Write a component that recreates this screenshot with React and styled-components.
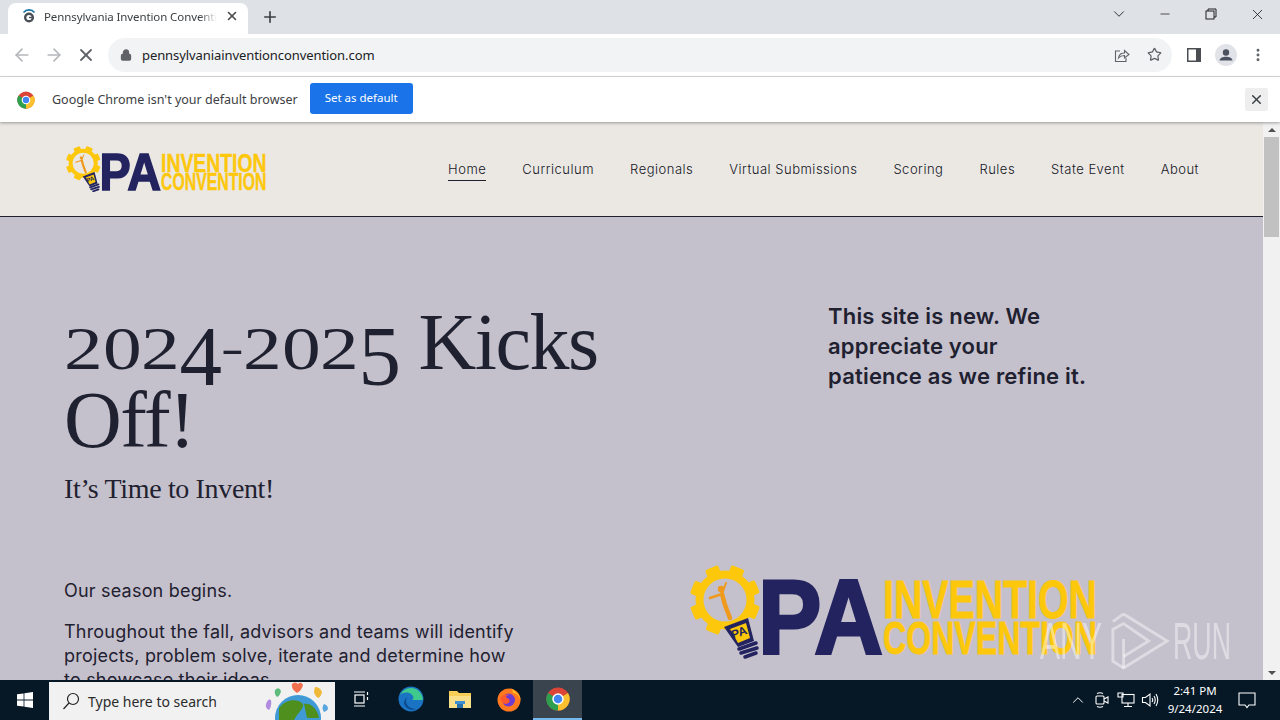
import React from 'react';
import styled, { createGlobalStyle } from 'styled-components';
import { ArrowLeft, ArrowRight, X, Lock, Star, Plus, ChevronDown, ChevronUp, Minus, MoreVertical } from 'lucide-react';

const GlobalStyle = createGlobalStyle`
  html, body { margin: 0; padding: 0; height: 100%; overflow: hidden; }
  * { box-sizing: border-box; }
  body { font-family: "Noto Sans", "Liberation Sans", sans-serif; }
`;

const Screen = styled.div`
  width: 1280px;
  height: 720px;
  display: flex;
  flex-direction: column;
  position: relative;
  overflow: hidden;
`;

const TabStrip = styled.div`
  height: 34px;
  flex: none;
  background: #dee1e6;
  display: flex;
  align-items: flex-end;
  padding-left: 8px;
`;

const Tab = styled.div`
  width: 240px;
  height: 31px;
  background: #fff;
  border-radius: 8px 8px 0 0;
  display: flex;
  align-items: center;
  padding: 0 9px 5px 14px;
  gap: 8px;
`;

const TabTitle = styled.span`
  flex: 1;
  font-size: 11.5px;
  letter-spacing: -.1px;
  color: #3c4043;
  white-space: nowrap;
  overflow: hidden;
  -webkit-mask-image: linear-gradient(to right, #000 90%, transparent);
  mask-image: linear-gradient(to right, #000 90%, transparent);
`;

const NewTab = styled.div`
  width: 28px;
  height: 28px;
  margin: 0 0 3px 8px;
  display: flex;
  align-items: center;
  justify-content: center;
  color: #3c4043;
`;

const WindowControls = styled.div`
  margin-left: auto;
  align-self: flex-start;
  display: flex;
  align-items: center;
  height: 28px;
  color: #202124;
`;

const WindowButton = styled.div`
  width: 46px;
  height: 28px;
  display: flex;
  align-items: center;
  justify-content: center;
`;

const Toolbar = styled.div`
  height: 43px;
  flex: none;
  background: #fff;
  border-bottom: 1px solid #dadce0;
  display: flex;
  align-items: center;
  padding: 0 4px 1px 6px;
`;

const NavButton = styled.div`
  width: 32px;
  height: 32px;
  display: flex;
  align-items: center;
  justify-content: center;
  color: ${p => p.$dim ? '#b4b7bb' : '#5f6368'};
`;

const Omnibox = styled.div`
  width: 1064px;
  height: 34px;
  margin: 0 6px;
  border-radius: 17px;
  background: #f1f3f4;
  display: flex;
  align-items: center;
  padding: 0 2px 0 12px;
  color: #5f6368;
`;

const Url = styled.span`
  font-size: 13px;
  letter-spacing: -.08px;
  color: #202124;
  margin-left: 10px;
  flex: 1;
`;

const InfoBar = styled.div`
  height: 45px;
  flex: none;
  background: #fff;
  display: flex;
  align-items: center;
  padding: 0 12px 0 17px;
  box-shadow: 0 1px 3px rgba(0, 0, 0, .35);
  position: relative;
  z-index: 2;
`;

const InfoText = styled.span`
  font-size: 12.5px;
  color: #3c4043;
  margin-left: 17px;
`;

const DefaultButton = styled.div`
  width: 103px;
  height: 31px;
  margin: 0 0 2px 12px;
  background: #1a73e8;
  border-radius: 3px;
  color: #fff;
  font-size: 11.5px;
  display: flex;
  align-items: center;
  justify-content: center;
  padding-bottom: 3px;
`;

const InfoClose = styled.div`
  margin-left: auto;
  width: 23px;
  height: 23px;
  background: #eeeeee;
  border-radius: 2px;
  display: flex;
  align-items: center;
  justify-content: center;
  color: #3c4043;
`;

const Viewport = styled.div`
  flex: 1;
  min-height: 0;
  display: flex;
`;

const Site = styled.div`
  flex: 1;
  min-width: 0;
  display: flex;
  flex-direction: column;
  overflow: hidden;
  background: #c4c0cc;
`;

const SiteHeader = styled.header`
  height: 95px;
  flex: none;
  background: #ebe8e4;
  border-bottom: 1px solid #1f2130;
  display: flex;
  align-items: center;
  justify-content: space-between;
  padding: 0 64px 0 65px;
`;

const Nav = styled.nav`
  display: flex;
  gap: 36px;
  margin-top: 4px;
`;

const NavLink = styled.a`
  font-family: "Inter", "Liberation Sans", sans-serif;
  font-size: 13px;
  font-weight: 300;
  letter-spacing: .5px;
  color: #14161f;
  padding-bottom: 3px;
  border-bottom: 1px solid ${p => p.$active ? '#1f2130' : 'transparent'};
`;

const Hero = styled.main`
  display: grid;
  grid-template-columns: 624px 1fr;
  padding: 86px 64px 0;
  color: #1f2130;
`;

const Heading = styled.h1`
  margin: 0;
  font-family: "Liberation Serif", serif;
  font-weight: 400;
  font-size: 80px;
  line-height: 78px;
  letter-spacing: -1.5px;
  width: 560px;
`;

const Low = styled.span`
  display: inline-block;
  font-size: 61px;
  line-height: 0;
  width: 38.5px;
  letter-spacing: 0;
  transform: scaleX(1.27);
  transform-origin: left center;
`;

const Drop = styled.span`
  font-size: 85px;
  line-height: 0;
  letter-spacing: -1px;
  position: relative;
  top: 16px;
`;

const Dash = styled.span`
  display: inline-block;
  line-height: 0;
  width: 22px;
  transform: scale(.85, .55) translateY(11px);
  transform-origin: left center;
`;

const Sub = styled.p`
  margin: 12px 0 0;
  font-family: "Liberation Serif", serif;
  font-size: 28px;
  line-height: 36px;
  letter-spacing: -.35px;
`;

const Note = styled.p`
  margin: -2px 0 0 140px;
  font-family: "Inter", "Liberation Sans", sans-serif;
  font-weight: 600;
  font-size: 22px;
  line-height: 30px;
  letter-spacing: .2px;
`;

const Copy = styled.div`
  margin-top: 72px;
  width: 455px;
  font-family: "Inter", "Liberation Sans", sans-serif;
  font-size: 18px;
  line-height: 24px;
  letter-spacing: .2px;
`;

const Para = styled.p`
  margin: 0 0 17px;
`;

const LogoSlot = styled.div`
  margin-top: 58px;
`;

const LogoSvg = styled.svg`
  display: block;
`;

const Scrollbar = styled.div`
  width: 17px;
  flex: none;
  background: #f1f1f1;
  display: flex;
  flex-direction: column;
  align-items: center;
  padding: 0 1px;
`;

const ScrollArrow = styled.div`
  height: 15px;
  flex: none;
  width: 100%;
  display: flex;
  align-items: center;
  justify-content: center;

  &::before {
    content: '';
    border-left: 4px solid transparent;
    border-right: 4px solid transparent;
    ${p => p.$up ? 'border-bottom: 4px solid #505050;' : 'border-top: 4px solid #505050;'}
  }
`;

const ScrollThumb = styled.div`
  width: 100%;
  height: 100px;
  background: #c1c1c1;
`;

const Spacer = styled.div`
  flex: 1;
`;

const Taskbar = styled.div`
  height: 40px;
  flex: none;
  background: #061826;
  display: flex;
  align-items: stretch;
`;

const StartButton = styled.div`
  width: 49px;
  display: flex;
  align-items: center;
  justify-content: center;
`;

const SearchBox = styled.div`
  width: 286px;
  margin-top: 2px;
  background: #f1f1f1;
  display: flex;
  align-items: center;
  padding: 0 1px 0 12px;
  color: #1a1a1a;
  overflow: hidden;
`;

const SearchText = styled.span`
  font-size: 14px;
  margin-left: 7px;
  color: #2b2b2b;
  flex: 1;
`;

const TaskIcon = styled.div`
  width: ${p => p.$w || 49}px;
  display: flex;
  align-items: center;
  justify-content: center;
  background: ${p => p.$active ? '#39444f' : 'transparent'};
  border-bottom: 2px solid ${p => p.$active ? '#76b9ed' : 'transparent'};
`;

const Tray = styled.div`
  margin-left: auto;
  display: flex;
  align-items: center;
  color: #fff;
  padding-right: 14px;
`;

const TrayIcon = styled.div`
  width: 24px;
  display: flex;
  align-items: center;
  justify-content: center;
`;

const Clock = styled.div`
  width: 66px;
  font-size: 11.5px;
  line-height: 18px;
  text-align: center;
  color: #fff;
`;

const NotifyButton = styled.div`
  width: 38px;
  display: flex;
  justify-content: center;
`;

const Watermark = styled.div`
  position: absolute;
  left: 1040px;
  top: 609px;
  display: flex;
  align-items: center;
  font-family: "Liberation Sans", sans-serif;
  color: rgba(255, 255, 255, .45);
  pointer-events: none;
`;

const MarkWord = styled.span`
  font-size: 52px;
  line-height: 64px;
  display: inline-block;
  width: ${p => p.$w}px;
  transform: scaleX(${p => p.$scale});
  transform-origin: left center;
  white-space: nowrap;
`;

const MarkIcon = styled.svg`
  margin: 0 3px 0 8px;
  flex: none;
`;

const ChromeLogo = ({ size = 18 }) => (
  <svg width={size} height={size} viewBox="0 0 48 48">
    <circle cx="24" cy="24" r="23" fill="#db4437" />
    <path d="M24 24 L44 12 A23 23 0 0 1 24 47 Z" fill="#fbc02d" />
    <path d="M24 24 L24 47 A23 23 0 0 1 4 12 Z" fill="#2e9e4f" />
    <circle cx="24" cy="24" r="11.5" fill="#fff" />
    <circle cx="24" cy="24" r="8.5" fill="#4285f4" />
  </svg>
);

const Favicon = () => (
  <svg width="14" height="16" viewBox="0 0 14 16" fill="none">
    <path d="M1.5 4.5 A7 7 0 0 1 12.5 4.5" stroke="#1a73a8" strokeWidth="1.6" />
    <circle cx="7" cy="9.5" r="5" fill="#4a4f55" />
    <circle cx="7" cy="9.5" r="2.6" fill="#fff" />
    <rect x="7" y="8.8" width="5" height="1.4" fill="#4a4f55" />
  </svg>
);

const Logo = ({ width }) => (
  <LogoSvg width={width} height={width * 95 / 410} viewBox="0 0 410 95">
    <g fill="#fdc70c">
      {[0, 45, 90, 135, 180, 225, 270, 315].map(a => (
        <rect key={a} x="30" y="0" width="14" height="12" rx="2" transform={`rotate(${a + 22} 37 35)`} />
      ))}
    </g>
    <circle cx="37" cy="35" r="25.5" fill="none" stroke="#fdc70c" strokeWidth="8" />
    <g stroke="#ef9a1d" fill="none" strokeLinecap="round">
      <path d="M22 33L34 29" strokeWidth="2.5" />
      <path d="M34 29L38 18" strokeWidth="2" />
      <path d="M34 29L37 40L42 53" strokeWidth="4.5" />
    </g>
    <circle cx="33" cy="24" r="3.2" fill="#ef9a1d" />
    <path d="M36 62 L60 53 L66 76 L50 82 Z" fill="#23235f" />
    <path d="M42 64 L58 58 L62 73 L50 78 Z" fill="#fdc70c" />
    <text x="45" y="74" fontFamily="Liberation Sans" fontWeight="700" fontSize="12" fill="#23235f" transform="rotate(-20 45 74)">PA</text>
    <path d="M51 84 L68 78 M53 88 L69 83 M57 92 L68 88" stroke="#23235f" strokeWidth="3.5" strokeLinecap="round" />
    <text x="70" y="89" fontFamily="Liberation Sans" fontWeight="700" fontSize="105" fill="#23235f" stroke="#23235f" strokeWidth="3" textLength="125" lengthAdjust="spacingAndGlyphs">PA</text>
    <text x="195" y="53" fontFamily="Liberation Sans" fontWeight="700" fontSize="53" fill="#fdc70c" stroke="#fdc70c" strokeWidth=".8" textLength="214" lengthAdjust="spacingAndGlyphs">INVENTION</text>
    <text x="195" y="89" fontFamily="Liberation Sans" fontWeight="700" fontSize="47" fill="#fdc70c" stroke="#fdc70c" strokeWidth=".8" textLength="214" lengthAdjust="spacingAndGlyphs">CONVENTION</text>
  </LogoSvg>
);

const year = (
  <>
    <Low>2</Low><Low>0</Low><Low>2</Low><Drop>4</Drop><Dash>-</Dash><Low>2</Low><Low>0</Low><Low>2</Low><Drop>5</Drop>
  </>
);

const navItems = ['Home', 'Curriculum', 'Regionals', 'Virtual Submissions', 'Scoring', 'Rules', 'State Event', 'About'];

export default function App() {
  return (
    <Screen>
      <GlobalStyle />
      <TabStrip>
        <Tab>
          <Favicon />
          <TabTitle>Pennsylvania Invention Convention</TabTitle>
          <X size={14} strokeWidth={2.6} color="#45484c" />
        </Tab>
        <NewTab><Plus size={18} strokeWidth={2.2} /></NewTab>
        <WindowControls>
          <WindowButton><ChevronDown size={18} strokeWidth={1.2} /></WindowButton>
          <WindowButton><Minus size={14} strokeWidth={1.3} /></WindowButton>
          <WindowButton>
            <svg width="12" height="12" viewBox="0 0 12 12" fill="none" stroke="#202124">
              <rect x="1" y="3" width="8" height="8" />
              <path d="M3 3V1H11V9H9" />
            </svg>
          </WindowButton>
          <WindowButton><X size={17} strokeWidth={1.2} /></WindowButton>
        </WindowControls>
      </TabStrip>

      <Toolbar>
        <NavButton $dim><ArrowLeft size={20} strokeWidth={2} /></NavButton>
        <NavButton $dim><ArrowRight size={20} strokeWidth={2} /></NavButton>
        <NavButton><X size={20} strokeWidth={2.2} /></NavButton>
        <Omnibox>
          <Lock size={12} strokeWidth={2.6} fill="#5f6368" />
          <Url>pennsylvaniainventionconvention.com</Url>
          <NavButton>
            <svg width="16" height="16" viewBox="0 0 16 16" fill="none" stroke="#5f6368" strokeWidth="1.1">
              <path d="M6 4H1.5V14.5H12V11" />
              <path d="M4.5 11C5 7.5 7.5 6 10.5 6V3.5L15 7.5L10.5 11V8.5C8 8.5 6 9.3 4.5 11Z" />
            </svg>
          </NavButton>
          <NavButton><Star size={15} strokeWidth={2} /></NavButton>
        </Omnibox>
        <NavButton>
          <svg width="14" height="14" viewBox="0 0 14 14">
            <rect width="14" height="14" fill="#4a4d52" />
            <rect x="1.5" y="1.5" width="7.5" height="11" fill="#fff" />
          </svg>
        </NavButton>
        <NavButton>
          <svg width="22" height="22" viewBox="0 0 22 22">
            <circle cx="11" cy="11" r="11" fill="#e2e3e8" />
            <circle cx="11" cy="8.5" r="3.2" fill="#4c5160" />
            <path d="M4.5 16.5C5 13.5 8 12.7 11 12.7S17 13.5 17.5 16.5Z" fill="#4c5160" />
          </svg>
        </NavButton>
        <NavButton><MoreVertical size={16} strokeWidth={2.4} /></NavButton>
      </Toolbar>

      <InfoBar>
        <ChromeLogo />
        <InfoText>Google Chrome isn't your default browser</InfoText>
        <DefaultButton>Set as default</DefaultButton>
        <InfoClose><X size={15} strokeWidth={2.4} /></InfoClose>
      </InfoBar>

      <Viewport>
        <Site>
          <SiteHeader>
            <Logo width={202} />
            <Nav>
              {navItems.map(item => (
                <NavLink key={item} $active={item === 'Home'}>{item}</NavLink>
              ))}
            </Nav>
          </SiteHeader>
          <Hero>
            <div>
              <Heading>{year} Kicks Off!</Heading>
              <Sub>It’s Time to Invent!</Sub>
            </div>
            <Note>This site is new. We<br />appreciate your<br />patience as we refine it.</Note>
            <Copy>
              <Para>Our season begins.</Para>
              <Para>Throughout the fall, advisors and teams will identify projects, problem solve, iterate and determine how to showcase their ideas.</Para>
            </Copy>
            <LogoSlot><Logo width={410} /></LogoSlot>
          </Hero>
        </Site>
        <Scrollbar>
          <ScrollArrow $up />
          <ScrollThumb />
          <Spacer />
          <ScrollArrow />
        </Scrollbar>
      </Viewport>

      <Taskbar>
        <StartButton>
          <svg width="16" height="16" viewBox="0 0 16 16" fill="#fff">
            <path d="M0 2.3L6.6 1.4V7.6H0Z M7.4 1.3L16 0V7.6H7.4Z M0 8.4H6.6V14.6L0 13.7Z M7.4 8.4H16V16L7.4 14.7Z" />
          </svg>
        </StartButton>
        <SearchBox>
          <svg width="20" height="20" viewBox="0 0 20 20" fill="none" stroke="#222" strokeWidth="1.2">
            <circle cx="12" cy="8" r="5.5" />
            <path d="M8 12L2.5 18" />
          </svg>
          <SearchText>Type here to search</SearchText>
          <svg width="72" height="38" viewBox="0 0 72 38">
            <circle cx="36" cy="36" r="23" fill="#3f9ad6" />
            <path d="M17 26C24 16 36 17 40 21C44 25 36 30 32 38H17Z M42 22C49 20 56 28 57 36H45Z" fill="#4f8f1e" />
            <path d="M4 22 q2 -6 5 -4 q1 6 -2 10 q-4 -2 -3 -6" fill="#b18be0" />
            <path d="M13 8 q4 -4 6 1 q-1 5 -4 6 q-3 -3 -2 -7" fill="#5dbb7b" />
            <path d="M30 2 q3 -3 6 0 q3 -3 5 1 q-1 5 -6 8 q-6 -4 -5 -9" fill="#f0704f" />
            <path d="M53 5 q5 0 7 5 q-1 5 -4 6 q-4 -3 -4 -7" fill="#f0b93a" />
            <path d="M62 22 q4 1 4 5 q-2 3 -4 3 q-3 -4 0 -8" fill="#5aa7e0" />
          </svg>
        </SearchBox>
        <TaskIcon $w={51}>
          <svg width="18" height="18" viewBox="0 0 18 18" fill="none" stroke="#fff" strokeWidth="1.2">
            <rect x="3" y="5" width="9" height="8" />
            <path d="M2 2H13 M2 16H13 M15.5 2V5 M15.5 7V10" />
          </svg>
        </TaskIcon>
        <TaskIcon>
          <svg width="26" height="26" viewBox="0 0 26 26">
            <circle cx="13" cy="13" r="12.5" fill="#1b73c4" />
            <path d="M25 15C25 8 20 2 13 2C8 2 4 5 2 9C5 6 10 6 13 8C16 10 16 13 14 14H25Z" fill="#3fc98d" />
            <path d="M8 15C8 20 13 23 18 23C14 25 7 23 6 17C6 14 8 12 10 11C9 12 8 13 8 15Z" fill="#0c4a8c" />
          </svg>
        </TaskIcon>
        <TaskIcon>
          <svg width="22" height="20" viewBox="0 0 22 20">
            <path d="M0 2H8L10 4H22V19H0Z" fill="#f7cf57" />
            <rect x="0" y="7" width="22" height="12" fill="#fbe08a" />
            <rect x="6" y="12" width="10" height="3" fill="#3d8fd1" />
            <rect x="8" y="15" width="6" height="4" fill="#2a6fa8" />
          </svg>
        </TaskIcon>
        <TaskIcon>
          <svg width="24" height="26" viewBox="0 0 24 26">
            <circle cx="12" cy="14" r="11.5" fill="#ff7a1f" />
            <path d="M12 1C18 5 24 9 23.5 15C23 10 19 7 16 7C16 4 14 2 12 1Z" fill="#ffc21f" />
            <circle cx="11.5" cy="14" r="6.5" fill="#6e3bd1" />
            <path d="M3 12C6 8 10 8 13 9C9 9 8 11 10 12C14 13 13 18 9 18C6 18 4 15 3 12Z" fill="#ff5a2e" />
          </svg>
        </TaskIcon>
        <TaskIcon $active><ChromeLogo size={24} /></TaskIcon>
        <Tray>
          <TrayIcon><ChevronUp size={18} strokeWidth={1.3} /></TrayIcon>
          <TrayIcon>
            <svg width="16" height="18" viewBox="0 0 16 18" fill="none" stroke="#fff" strokeWidth="1.1">
              <rect x="2" y="5" width="8" height="8" rx="1" />
              <path d="M10 8L14 6V12L10 10 M3 2.5Q6 1 9 2.5 M3 15.5Q6 17 9 15.5" />
            </svg>
          </TrayIcon>
          <TrayIcon>
            <svg width="18" height="16" viewBox="0 0 18 16" fill="none" stroke="#fff" strokeWidth="1.1">
              <rect x="5" y="2.5" width="12" height="8.5" />
              <path d="M1 1H6V5H1Z M11 11V14 M7 14.5H15" />
            </svg>
          </TrayIcon>
          <TrayIcon>
            <svg width="18" height="16" viewBox="0 0 18 16" fill="none" stroke="#fff" strokeWidth="1.1">
              <path d="M1.5 5.5H4.5L9 2V14L4.5 10.5H1.5Z M11 6Q12.5 8 11 10 M13 4Q15.5 8 13 12 M15 2Q18.5 8 15 14" />
            </svg>
          </TrayIcon>
          <Clock>2:41 PM<br />9/24/2024</Clock>
          <NotifyButton>
            <svg width="18" height="17" viewBox="0 0 18 17" fill="none" stroke="#fff" strokeWidth="1.1">
              <path d="M1 1H17V13H11L9 15.5L7 13H1Z" />
            </svg>
          </NotifyButton>
        </Tray>
      </Taskbar>

      <Watermark>
        <MarkWord $w={62} $scale={.58}>ANY</MarkWord>
        <MarkIcon width="60" height="64" viewBox="0 0 62 64" fill="none" stroke="rgba(255,255,255,.45)" strokeWidth="3">
          <path d="M14 4L59 32L14 60L3 53V20L14 14L40 32L14 48" />
          <path d="M3 12L14 4 M14 60V30" />
        </MarkIcon>
        <MarkWord $w={58} $scale={.515}>RUN</MarkWord>
      </Watermark>
    </Screen>
  );
}
